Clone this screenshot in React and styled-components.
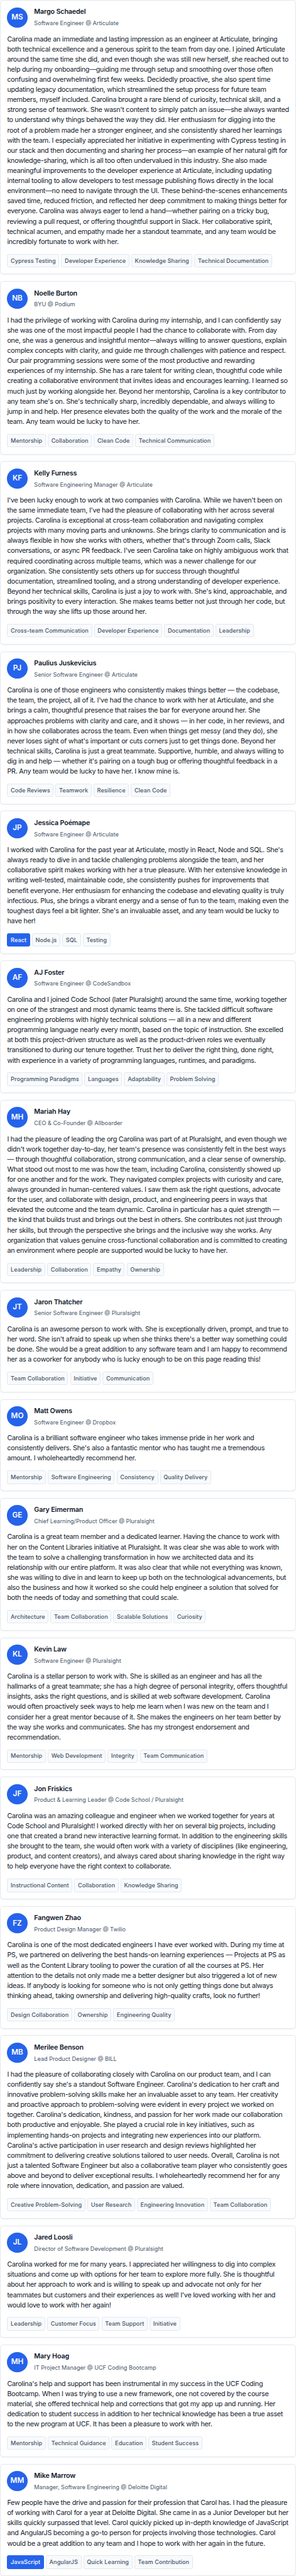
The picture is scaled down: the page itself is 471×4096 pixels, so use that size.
import React from "react";
import styled, { createGlobalStyle } from "styled-components";

const s = (n) => `${(n * 471) / 702}px`;
/* hairline borders render at a full pixel, so padding gives back the difference */
const inset = (n) => `${((n + 1) * 471) / 702 - 1}px`;

const GlobalStyle = createGlobalStyle`
  * { box-sizing: border-box; }
  body {
    margin: 0;
    background: #ffffff;
    color: #0f172a;
    font-family: Inter, "Liberation Sans", sans-serif;
    font-size: ${s(16)};
    line-height: 1.5;
  }
`;

const List = styled.main`
  display: flex;
  flex-direction: column;
  gap: ${s(16)};
  width: 471px;
`;

const Card = styled.article`
  display: flex;
  flex-direction: column;
  gap: ${s(16)};
  padding: ${inset(16)};
  background: #ffffff;
  border: 1px solid #e2e8f0;
  border-radius: ${s(8)};
  box-shadow: 0 ${s(1)} ${s(2)} rgba(0, 0, 0, 0.05);
`;

const Header = styled.header`
  display: flex;
  align-items: center;
  gap: ${s(16)};
  height: ${s(48.4)};
`;

const Avatar = styled.div`
  display: flex;
  align-items: center;
  justify-content: center;
  flex-shrink: 0;
  width: ${s(48)};
  height: ${s(48)};
  border-radius: 50%;
  background: #2563eb;
  color: #ffffff;
  font-size: ${s(17.6)};
  font-weight: 600;
`;

const Person = styled.div`
  display: flex;
  flex-direction: column;
  gap: ${s(4)};
`;

const Name = styled.h3`
  margin: 0;
  font-size: ${s(16)};
  line-height: ${s(24)};
  font-weight: 600;
  letter-spacing: -0.013em;
`;

const Role = styled.p`
  margin: 0;
  color: #475569;
  font-size: ${s(13.6)};
  line-height: ${s(20.4)};
`;

const Quote = styled.p`
  margin: 0 -6px 0 0;
  font-size: ${s(16)};
  line-height: ${s(24)};
  letter-spacing: -0.021em;
  white-space: pre-line;
`;

const Tags = styled.ul`
  display: flex;
  gap: ${s(4.6)};
  margin: 0;
  padding: 0;
  list-style: none;
`;

const Tag = styled.li`
  display: flex;
  align-items: center;
  height: ${s(32)};
  padding: 0 ${inset(7.45)};
  border: 1px solid ${(p) => (p.$primary ? "#2563eb" : "#e2e8f0")};
  border-radius: ${s(4)};
  background: ${(p) => (p.$primary ? "#2563eb" : "#f8fafc")};
  color: ${(p) => (p.$primary ? "#ffffff" : "#475569")};
  font-size: ${s(13.6)};
  font-weight: 500;
  letter-spacing: 0.0075em;
  white-space: nowrap;
`;

const testimonials = [
  {
    initials: "MS",
    name: "Margo Schaedel",
    role: "Software Engineer @ Articulate",
    quote: `Carolina made an immediate and lasting impression as an engineer at Articulate, bringing
      both technical excellence and a generous spirit to the team from day one. I joined Articulate
      around the same time she did, and even though she was still new herself, she reached out to
      help during my onboarding—guiding me through setup and smoothing over those often
      confusing and overwhelming first few weeks. Decidedly proactive, she also spent time
      updating legacy documentation, which streamlined the setup process for future team
      members, myself included. Carolina brought a rare blend of curiosity, technical skill, and a
      strong sense of teamwork. She wasn't content to simply patch an issue—she always wanted
      to understand why things behaved the way they did. Her enthusiasm for digging into the
      root of a problem made her a stronger engineer, and she consistently shared her learnings
      with the team. I especially appreciated her initiative in experimenting with Cypress testing in
      our stack and then documenting and sharing her process—an example of her natural gift for
      knowledge-sharing, which is all too often undervalued in this industry. She also made
      meaningful improvements to the developer experience at Articulate, including updating
      internal tooling to allow developers to test message publishing flows directly in the local
      environment—no need to navigate through the UI. These behind-the-scenes enhancements
      saved time, reduced friction, and reflected her deep commitment to making things better for
      everyone. Carolina was always eager to lend a hand—whether pairing on a tricky bug,
      reviewing a pull request, or offering thoughtful support in Slack. Her collaborative spirit,
      technical acumen, and empathy made her a standout teammate, and any team would be
      incredibly fortunate to work with her.`,
    tags: ["Cypress Testing", "Developer Experience", "Knowledge Sharing", "Technical Documentation"],
  },
  {
    initials: "NB",
    name: "Noelle Burton",
    role: "BYU @ Podium",
    quote: `I had the privilege of working with Carolina during my internship, and I can confidently say
      she was one of the most impactful people I had the chance to collaborate with. From day
      one, she was a generous and insightful mentor—always willing to answer questions, explain
      complex concepts with clarity, and guide me through challenges with patience and respect.
      Our pair programming sessions were some of the most productive and rewarding
      experiences of my internship. She has a rare talent for writing clean, thoughtful code while
      creating a collaborative environment that invites ideas and encourages learning. I learned so
      much just by working alongside her. Beyond her mentorship, Carolina is a key contributor to
      any team she's on. She's technically sharp, incredibly dependable, and always willing to
      jump in and help. Her presence elevates both the quality of the work and the morale of the
      team. Any team would be lucky to have her.`,
    tags: ["Mentorship", "Collaboration", "Clean Code", "Technical Communication"],
  },
  {
    initials: "KF",
    name: "Kelly Furness",
    role: "Software Engineering Manager @ Articulate",
    quote: `I've been lucky enough to work at two companies with Carolina. While we haven't been on
      the same immediate team, I've had the pleasure of collaborating with her across several
      projects. Carolina is exceptional at cross-team collaboration and navigating complex
      projects with many moving parts and unknowns. She brings clarity to communication and is
      always flexible in how she works with others, whether that's through Zoom calls, Slack
      conversations, or async PR feedback. I've seen Carolina take on highly ambiguous work that
      required coordinating across multiple teams, which was a newer challenge for our
      organization. She consistently sets others up for success through thoughtful
      documentation, streamlined tooling, and a strong understanding of developer experience.
      Beyond her technical skills, Carolina is just a joy to work with. She's kind, approachable, and
      brings positivity to every interaction. She makes teams better not just through her code, but
      through the way she lifts up those around her.`,
    tags: ["Cross-team Communication", "Developer Experience", "Documentation", "Leadership"],
  },
  {
    initials: "PJ",
    name: "Paulius Juskevicius",
    role: "Senior Software Engineer @ Articulate",
    quote: `Carolina is one of those engineers who consistently makes things better — the codebase,
      the team, the project, all of it. I've had the chance to work with her at Articulate, and she
      brings a calm, thoughtful presence that raises the bar for everyone around her. She
      approaches problems with clarity and care, and it shows — in her code, in her reviews, and
      in how she collaborates across the team. Even when things get messy (and they do), she
      never loses sight of what's important or cuts corners just to get things done. Beyond her
      technical skills, Carolina is just a great teammate. Supportive, humble, and always willing to
      dig in and help — whether it's pairing on a tough bug or offering thoughtful feedback in a
      PR. Any team would be lucky to have her. I know mine is.`,
    tags: ["Code Reviews", "Teamwork", "Resilience", "Clean Code"],
  },
  {
    initials: "JP",
    name: "Jessica Poémape",
    role: "Software Engineer @ Articulate",
    quote: `I worked with Carolina for the past year at Articulate, mostly in React, Node and SQL. She's
      always ready to dive in and tackle challenging problems alongside the team, and her
      collaborative spirit makes working with her a true pleasure. With her extensive knowledge in
      writing well-tested, maintainable code, she consistently pushes for improvements that
      benefit everyone. Her enthusiasm for enhancing the codebase and elevating quality is truly
      infectious. Plus, she brings a vibrant energy and a sense of fun to the team, making even the
      toughest days feel a bit lighter. She's an invaluable asset, and any team would be lucky to
      have her!`,
    tags: ["React", "Node.js", "SQL", "Testing"],
    primary: "React",
  },
  {
    initials: "AF",
    name: "AJ Foster",
    role: "Software Engineer @ CodeSandbox",
    quote: `Carolina and I joined Code School (later Pluralsight) around the same time, working together
      on one of the strangest and most dynamic teams there is. She tackled difficult software
      engineering problems with highly technical solutions — all in a new and different
      programming language nearly every month, based on the topic of instruction. She excelled
      at both this project-driven structure as well as the product-driven roles we eventually
      transitioned to during our tenure together. Trust her to deliver the right thing, done right,
      with experience in a variety of programming languages, runtimes, and paradigms.`,
    tags: ["Programming Paradigms", "Languages", "Adaptability", "Problem Solving"],
  },
  {
    initials: "MH",
    name: "Mariah Hay",
    role: "CEO & Co-Founder @ Allboarder",
    quote: `I had the pleasure of leading the org Carolina was part of at Pluralsight, and even though we
      didn't work together day-to-day, her team's presence was consistently felt in the best ways
      — through thoughtful collaboration, strong communication, and a clear sense of ownership.
      What stood out most to me was how the team, including Carolina, consistently showed up
      for one another and for the work. They navigated complex projects with curiosity and care,
      always grounded in human-centered values. I saw them ask the right questions, advocate
      for the user, and collaborate with design, product, and engineering peers in ways that
      elevated the outcome and the team dynamic. Carolina in particular has a quiet strength —
      the kind that builds trust and brings out the best in others. She contributes not just through
      her skills, but through the perspective she brings and the inclusive way she works. Any
      organization that values genuine cross-functional collaboration and is committed to creating
      an environment where people are supported would be lucky to have her.`,
    tags: ["Leadership", "Collaboration", "Empathy", "Ownership"],
  },
  {
    initials: "JT",
    name: "Jaron Thatcher",
    role: "Senior Software Engineer @ Pluralsight",
    quote: `Carolina is an awesome person to work with. She is exceptionally driven, prompt, and true to
      her word. She isn't afraid to speak up when she thinks there's a better way something could
      be done. She would be a great addition to any software team and I am happy to recommend
      her as a coworker for anybody who is lucky enough to be on this page reading this!`,
    tags: ["Team Collaboration", "Initiative", "Communication"],
  },
  {
    initials: "MO",
    name: "Matt Owens",
    role: "Software Engineer @ Dropbox",
    quote: `Carolina is a brilliant software engineer who takes immense pride in her work and
      consistently delivers. She's also a fantastic mentor who has taught me a tremendous
      amount. I wholeheartedly recommend her.`,
    tags: ["Mentorship", "Software Engineering", "Consistency", "Quality Delivery"],
  },
  {
    initials: "GE",
    name: "Gary Eimerman",
    role: "Chief Learning/Product Officer @ Pluralsight",
    quote: `Carolina is a great team member and a dedicated learner. Having the chance to work with
      her on the Content Libraries initiative at Pluralsight. It was clear she was able to work with
      the team to solve a challenging transformation in how we architected data and its
      relationship with our entire platform. It was also clear that while not everything was known,
      she was willing to dive in and learn to keep up both on the technological advancements, but
      also the business and how it worked so she could help engineer a solution that solved for
      both the needs of today and something that could scale.`,
    tags: ["Architecture", "Team Collaboration", "Scalable Solutions", "Curiosity"],
  },
  {
    initials: "KL",
    name: "Kevin Law",
    role: "Software Engineer @ Pluralsight",
    quote: `Carolina is a stellar person to work with. She is skilled as an engineer and has all the
      hallmarks of a great teammate; she has a high degree of personal integrity, offers thoughtful
      insights, asks the right questions, and is skilled at web software development. Carolina
      would often proactively seek ways to help me learn when I was new on the team and I
      consider her a great mentor because of it. She makes the engineers on her team better by
      the way she works and communicates. She has my strongest endorsement and
      recommendation.`,
    tags: ["Mentorship", "Web Development", "Integrity", "Team Communication"],
  },
  {
    initials: "JF",
    name: "Jon Friskics",
    role: "Product & Learning Leader @ Code School / Pluralsight",
    quote: `Carolina was an amazing colleague and engineer when we worked together for years at
      Code School and Pluralsight! I worked directly with her on several big projects, including
      one that created a brand new interactive learning format. In addition to the engineering skills
      she brought to the team, she would often work with a variety of disciplines (like engineering,
      product, and content creators), and always cared about sharing knowledge in the right way
      to help everyone have the right context to collaborate.`,
    tags: ["Instructional Content", "Collaboration", "Knowledge Sharing"],
  },
  {
    initials: "FZ",
    name: "Fangwen Zhao",
    role: "Product Design Manager @ Twilio",
    quote: `Carolina is one of the most dedicated engineers I have ever worked with. During my time at
      PS, we partnered on delivering the best hands-on learning experiences — Projects at PS as
      well as the Content Library tooling to power the curation of all the courses at PS. Her
      attention to the details not only made me a better designer but also triggered a lot of new
      ideas. If anybody is looking for someone who is not only getting things done but always
      thinking ahead, taking ownership and delivering high-quality crafts, look no further!`,
    tags: ["Design Collaboration", "Ownership", "Engineering Quality"],
  },
  {
    initials: "MB",
    name: "Merilee Benson",
    role: "Lead Product Designer @ BILL",
    quote: `I had the pleasure of collaborating closely with Carolina on our product team, and I can
      confidently say she's a standout Software Engineer. Carolina's dedication to her craft and
      innovative problem-solving skills make her an invaluable asset to any team. Her creativity
      and proactive approach to problem-solving were evident in every project we worked on
      together. Carolina's dedication, kindness, and passion for her work made our collaboration
      both productive and enjoyable. She played a crucial role in key initiatives, such as
      implementing hands-on projects and integrating new experiences into our platform.
      Carolina's active participation in user research and design reviews highlighted her
      commitment to delivering creative solutions tailored to user needs. Overall, Carolina is not
      just a talented Software Engineer but also a collaborative team player who consistently goes
      above and beyond to deliver exceptional results. I wholeheartedly recommend her for any
      role where innovation, dedication, and passion are valued.`,
    tags: ["Creative Problem-Solving", "User Research", "Engineering Innovation", "Team Collaboration"],
  },
  {
    initials: "JL",
    name: "Jared Loosli",
    role: "Director of Software Development @ Pluralsight",
    quote: `Carolina worked for me for many years. I appreciated her willingness to dig into complex
      situations and come up with options for her team to explore more fully. She is thoughtful
      about her approach to work and is willing to speak up and advocate not only for her
      teammates but customers and their experiences as well! I've loved working with her and
      would love to work with her again!`,
    tags: ["Leadership", "Customer Focus", "Team Support", "Initiative"],
  },
  {
    initials: "MH",
    name: "Mary Hoag",
    role: "IT Project Manager @ UCF Coding Bootcamp",
    quote: `Carolina's help and support has been instrumental in my success in the UCF Coding
      Bootcamp. When I was trying to use a new framework, one not covered by the course
      material, she offered technical help and corrections that got my app up and running. Her
      dedication to student success in addition to her technical knowledge has been a true asset
      to the new program at UCF. It has been a pleasure to work with her.`,
    tags: ["Mentorship", "Technical Guidance", "Education", "Student Success"],
  },
  {
    initials: "MM",
    name: "Mike Marrow",
    role: "Manager, Software Engineering @ Deloitte Digital",
    quote: `Few people have the drive and passion for their profession that Carol has. I had the pleasure
      of working with Carol for a year at Deloitte Digital. She came in as a Junior Developer but her
      skills quickly surpassed that level. Carol quickly picked up in-depth knowledge of JavaScript
      and AngularJS becoming a go-to person for projects involving those technologies. Carol
      would be a great addition to any team and I hope to work with her again in the future.`,
    tags: ["JavaScript", "AngularJS", "Quick Learning", "Team Contribution"],
    primary: "JavaScript",
  },
];

export default function App() {
  return (
    <>
      <GlobalStyle />
      <List>
        {testimonials.map((t) => (
          <Card key={t.name}>
            <Header>
              <Avatar>{t.initials}</Avatar>
              <Person>
                <Name>{t.name}</Name>
                <Role>{t.role}</Role>
              </Person>
            </Header>
            <Quote>{t.quote}</Quote>
            <Tags>
              {t.tags.map((tag) => (
                <Tag key={tag} $primary={tag === t.primary}>
                  {tag}
                </Tag>
              ))}
            </Tags>
          </Card>
        ))}
      </List>
    </>
  );
}
